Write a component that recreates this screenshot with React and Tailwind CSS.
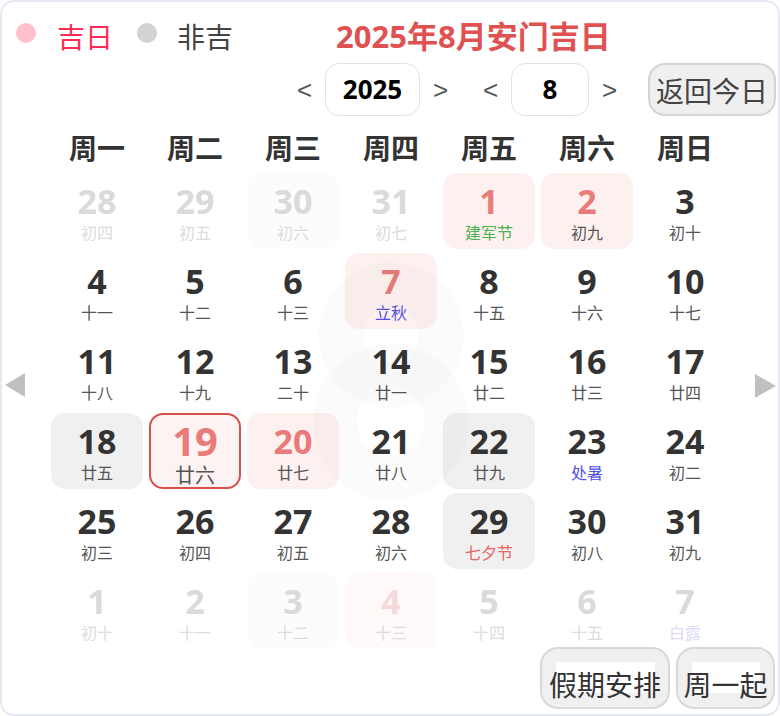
import React from "react";

const rows = [
  [
    { d: 28, l: "初四", t: "fade" },
    { d: 29, l: "初五", t: "fade" },
    { d: 30, l: "初六", t: "fade", bg: "fadebg" },
    { d: 31, l: "初七", t: "fade" },
    { d: 1, l: "建军节", bg: "red", lc: "green" },
    { d: 2, l: "初九", bg: "red" },
    { d: 3, l: "初十" },
  ],
  [
    { d: 4, l: "十一" },
    { d: 5, l: "十二" },
    { d: 6, l: "十三" },
    { d: 7, l: "立秋", bg: "red", lc: "blue" },
    { d: 8, l: "十五" },
    { d: 9, l: "十六" },
    { d: 10, l: "十七" },
  ],
  [
    { d: 11, l: "十八" },
    { d: 12, l: "十九" },
    { d: 13, l: "二十" },
    { d: 14, l: "廿一" },
    { d: 15, l: "廿二" },
    { d: 16, l: "廿三" },
    { d: 17, l: "廿四" },
  ],
  [
    { d: 18, l: "廿五", bg: "gray" },
    { d: 19, l: "廿六", today: true },
    { d: 20, l: "廿七", bg: "red" },
    { d: 21, l: "廿八" },
    { d: 22, l: "廿九", bg: "gray" },
    { d: 23, l: "处暑", lc: "blue" },
    { d: 24, l: "初二" },
  ],
  [
    { d: 25, l: "初三" },
    { d: 26, l: "初四" },
    { d: 27, l: "初五" },
    { d: 28, l: "初六" },
    { d: 29, l: "七夕节", bg: "gray", lc: "red" },
    { d: 30, l: "初八" },
    { d: 31, l: "初九" },
  ],
  [
    { d: 1, l: "初十", t: "fade" },
    { d: 2, l: "十一", t: "fade" },
    { d: 3, l: "十二", t: "fade", bg: "fadebg" },
    { d: 4, l: "十三", t: "fadered", bg: "fadered" },
    { d: 5, l: "十四", t: "fade" },
    { d: 6, l: "十五", t: "fade" },
    { d: 7, l: "白露", t: "fade", lc: "fadeblue" },
  ],
];

const bgCls = {
  red: "bg-[#fdf1f0]",
  gray: "bg-[#f0f0f0]",
  fadebg: "bg-[#fcfcfc]",
  fadered: "bg-[#fffaf9]",
};

function Cell({ c }) {
  let box = "h-[76px] rounded-[14px] flex flex-col items-center ";
  if (c.today) box += "bg-[#fdf3f2] border-2 border-[#d6504c] ";
  else if (c.bg) box += bgCls[c.bg] + " ";

  let numCls = "text-[#333333]";
  if (c.t === "fade") numCls = "text-[#dadada]";
  else if (c.t === "fadered") numCls = "text-[#f6d8d8]";
  else if (c.bg === "red" || c.today) numCls = "text-[#e97b7b]";

  let lunCls = "text-[#555555]";
  if (c.t === "fade" || c.t === "fadered") lunCls = "text-[#dcdcdc]";
  if (c.lc === "green") lunCls = "text-[#4cb050]";
  if (c.lc === "blue") lunCls = "text-[#5050e6]";
  if (c.lc === "red") lunCls = "text-[#e86464]";
  if (c.lc === "fadeblue") lunCls = "text-[#dcdcf8]";

  if (c.today) {
    return (
      <div className={box}>
        <div className={`mt-[7px] h-[38px] leading-[38px] text-[40px] font-bold ${numCls}`}>{c.d}</div>
        <div className={`mt-[6px] h-[20px] leading-[20px] text-[20px] ${lunCls}`}>{c.l}</div>
      </div>
    );
  }
  return (
    <div className={box}>
      <div className={`mt-[11px] h-[34px] leading-[34px] text-[34px] font-bold ${numCls}`}>{c.d}</div>
      <div className={`mt-[5px] h-[20px] leading-[20px] text-[16px] ${lunCls}`}>{c.l}</div>
    </div>
  );
}

function Chevron({ ch }) {
  return (
    <span className="w-[13px] flex justify-center text-[26px] text-[#555555] font-['Liberation_Sans',sans-serif] leading-none">
      {ch}
    </span>
  );
}

export default function App() {
  const weeks = ["周一", "周二", "周三", "周四", "周五", "周六", "周日"];
  return (
    <div className="relative w-[780px] h-[716px] overflow-hidden bg-white border-2 border-[#e6e9f4] rounded-[14px] font-['Open_Sans','Noto_Sans_CJK_SC',sans-serif]">
      {/* row 1 */}
      <div className="mt-[14px] h-[40px] flex items-center pl-[14px]">
        <span className="w-[20px] h-[20px] rounded-full bg-[#ffc0cb] -mt-[6px]"></span>
        <span className="ml-[21px] text-[28px] text-[#ff2d55] font-['Noto_Sans_CJK_SC',sans-serif] leading-none">吉日</span>
        <span className="ml-[24px] w-[20px] h-[20px] rounded-full bg-[#d3d3d3] -mt-[6px]"></span>
        <span className="ml-[20px] text-[28px] text-[#444444] font-['Noto_Sans_CJK_SC',sans-serif] leading-none">非吉</span>
        <span className="ml-[103px] text-[31px] font-bold text-[#e05252] leading-none">2025年8月安门吉日</span>
      </div>

      {/* row 2 */}
      <div className="mt-[7px] h-[53px] flex justify-end items-center pr-[2px]">
        <Chevron ch="<" />
        <div className="ml-[14px] w-[95px] h-[53px] rounded-[14px] border-[1.5px] border-[#e2e2e6] flex items-center justify-center text-[26px] font-bold text-black">
          2025
        </div>
        <span className="ml-[14px]"><Chevron ch=">" /></span>
        <span className="ml-[37px]"><Chevron ch="<" /></span>
        <div className="ml-[14px] w-[78px] h-[53px] rounded-[14px] border-[1.5px] border-[#e2e2e6] flex items-center justify-center text-[26px] font-bold text-black">
          8
        </div>
        <span className="ml-[14px]"><Chevron ch=">" /></span>
        <div className="ml-[32px] w-[128px] h-[53px] rounded-[17px] border-2 border-[#d4d4d4] bg-[#efefef] flex items-center justify-center text-[28px] text-[#444444] font-['Noto_Sans_CJK_SC',sans-serif]">
          返回今日
        </div>
      </div>

      {/* weekday header */}
      <div className="mt-[5px] h-[52px] ml-[49px] grid grid-cols-[repeat(7,92px)] gap-x-[6px] items-center">
        {weeks.map((w) => (
          <div key={w} className="text-center text-[28px] font-bold text-[#333333] font-['Noto_Sans_CJK_SC',sans-serif] leading-none">
            {w}
          </div>
        ))}
      </div>

      {/* grid with side arrows */}
      <div className="flex items-start">
        <div className="w-[49px] pt-[200px] pl-[3px]">
          <svg width="20" height="24" viewBox="0 0 20 24">
            <polygon points="20,0 20,24 0,12" fill="#c0c0c0" />
          </svg>
        </div>
        <div className="grid grid-cols-[repeat(7,92px)] gap-x-[6px] gap-y-[4px]">
          {rows.flat().map((c, i) => (
            <Cell key={i} c={c} />
          ))}
        </div>
        <div className="ml-[24px] pt-[201px]">
          <svg width="21" height="24" viewBox="0 0 21 24">
            <polygon points="0,0 0,24 21,12" fill="#c0c0c0" />
          </svg>
        </div>
      </div>

      {/* bottom buttons */}
      <div className="-mt-[2px] flex justify-end gap-[6px] pr-[3px]">
        <div className="w-[130px] h-[62px] rounded-[18px] border-2 border-[#d8d8d8] bg-[#f0f0f0] flex justify-center pt-[13px]">
          <div className="w-[99px] h-[31px] bg-white flex justify-center">
            <span className="whitespace-nowrap text-[28px] leading-[44px] h-[31px] text-[#333333] font-['Noto_Sans_CJK_SC',sans-serif]">假期安排</span>
          </div>
        </div>
        <div className="w-[99px] h-[62px] rounded-[18px] border-2 border-[#d8d8d8] bg-[#f0f0f0] flex justify-center pt-[13px]">
          <div className="w-[68px] h-[31px] bg-white flex justify-center">
            <span className="whitespace-nowrap text-[28px] leading-[44px] h-[31px] text-[#333333] font-['Noto_Sans_CJK_SC',sans-serif]">周一起</span>
          </div>
        </div>
      </div>

      {/* watermark "8" drawn as two faint rings */}
      <svg className="pointer-events-none absolute left-0 top-0" width="780" height="716" viewBox="0 0 780 716">
        <circle cx="389" cy="333" r="50" fill="none" stroke="rgba(0,0,0,0.016)" strokeWidth="45" />
        <circle cx="389" cy="420" r="56" fill="none" stroke="rgba(0,0,0,0.016)" strokeWidth="44" />
      </svg>
    </div>
  );
}
